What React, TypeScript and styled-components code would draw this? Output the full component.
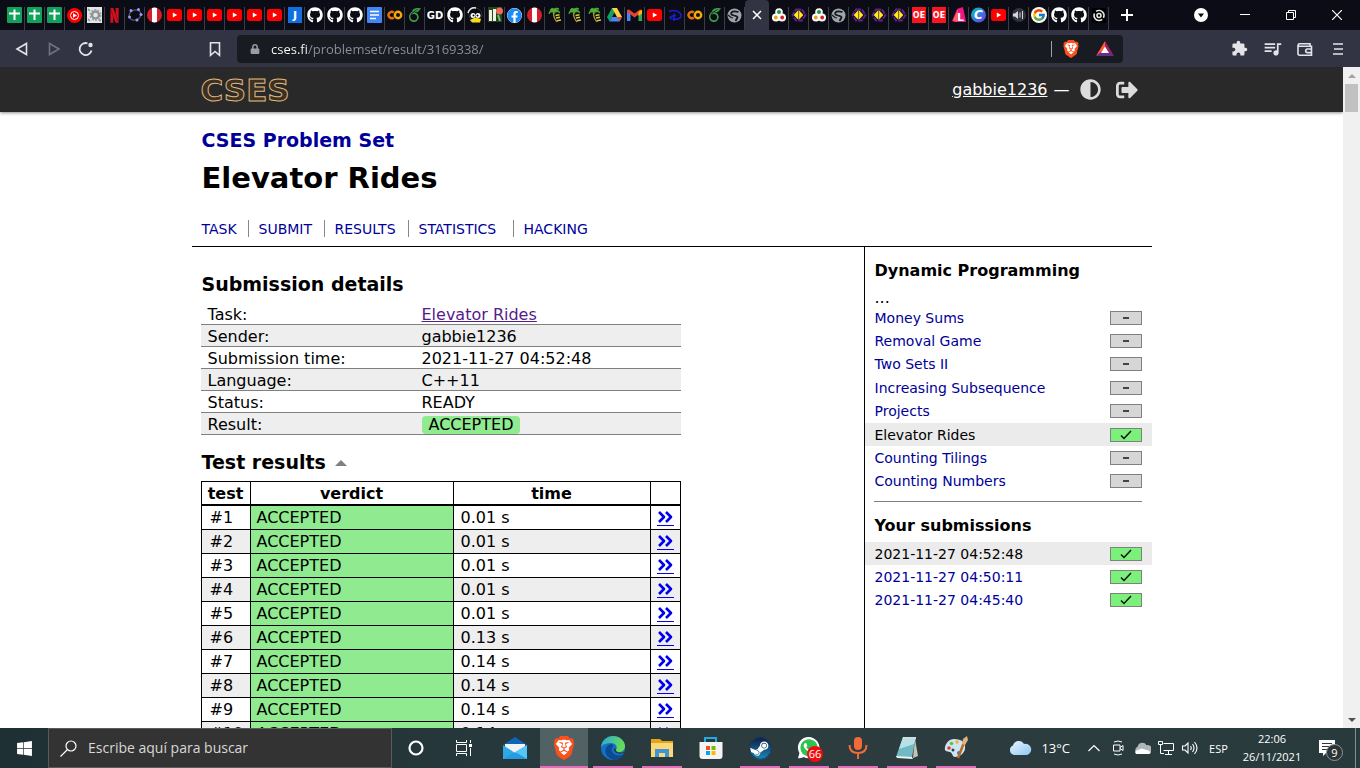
import React from "react";
import styled, { createGlobalStyle, css } from "styled-components";
import {
  FaGithub, FaFacebook, FaAdjust, FaSignOutAlt,
  FaWhatsapp, FaSteam, FaLock, FaWindows,
} from "react-icons/fa";
import { FcGoogle } from "react-icons/fc";
import { SiBrave, SiOverleaf, SiNetflix } from "react-icons/si";
import { MdQueueMusic, MdExtension } from "react-icons/md";

const pageFont = '"DejaVu Sans", Verdana, sans-serif';
const uiFont = '"Open Sans", "Segoe UI", sans-serif';

const GlobalStyle = createGlobalStyle`
  * { box-sizing: border-box; }
  body { margin: 0; background: #fff; }
  button { border: 0; padding: 0; background: none; color: inherit; font: inherit; }
  h1, h2, h3, ul { margin: 0; padding: 0; }
  svg { display: block; flex: none; }
`;

const Shell = styled.div`
  display: flex;
  flex-direction: column;
  height: 100vh;
  overflow: hidden;
  font-family: ${uiFont};
`;

/* ---------- browser chrome ---------- */

const TabStrip = styled.div`
  display: flex;
  height: 30px;
  flex: none;
  padding-left: 5px;
  background: #0b0c15;
  color: #fff;
`;

const Tab = styled.button`
  display: flex;
  align-items: center;
  justify-content: center;
  width: 20px;
  height: 23px;
  margin-top: 7px;
  padding-bottom: 7px;
  border-right: 1px solid #3c3d45;
`;

const ActiveTab = styled.button`
  display: flex;
  align-items: center;
  justify-content: center;
  width: 24px;
  height: 30px;
  border-radius: 4px 4px 0 0;
  background: #323443;
`;

const StripButton = styled.button<{ $width: number }>`
  display: flex;
  align-items: center;
  justify-content: center;
  width: ${(p) => p.$width}px;
  height: 30px;
`;

const StripSpace = styled.div`
  flex: 1;
`;

const Toolbar = styled.div`
  display: flex;
  align-items: center;
  flex: none;
  height: 37px;
  padding: 0 6px;
  background: #323443;
  color: #e4e4e8;
`;

const ToolButton = styled.button<{ $dim?: boolean }>`
  display: flex;
  align-items: center;
  justify-content: center;
  width: 32px;
  height: 30px;
  opacity: ${(p) => (p.$dim ? 0.35 : 1)};
`;

const NavGroup = styled.div`
  display: flex;
  flex: 1;
  justify-content: space-between;
  max-width: 225px;
  margin-right: 6px;
`;

const ToolGroup = styled.div`
  display: flex;
  margin-left: auto;
  gap: 1px;
`;

const AddressBar = styled.div`
  display: flex;
  align-items: center;
  flex: 1;
  max-width: 886px;
  height: 28px;
  padding: 0 2px 0 13px;
  border-radius: 4px;
  background: #191b23;
  color: #9a9ca6;
`;

const AddressInput = styled.input`
  flex: 1;
  min-width: 0;
  height: 24px;
  margin-left: 11px;
  padding: 0;
  border: 0;
  outline: 0;
  font: 13px/24px ${uiFont};
  color: #8f9199;
  background: linear-gradient(90deg, #fff 37px, #8f9199 37px);
  background-clip: text;
  -webkit-text-fill-color: transparent;
`;

const AddressDivider = styled.span`
  width: 1px;
  height: 16px;
  margin-right: 3px;
  background: #a0a1a8;
`;

const Shields = styled(ToolButton)`
  margin-right: 2px;
`;

/* ---------- web page ---------- */

const Viewport = styled.div`
  display: flex;
  flex: 1;
  min-height: 0;
`;

const Page = styled.div`
  flex: 1;
  overflow-y: auto;
  scrollbar-width: none;
  background: #fff;
  color: #000;
  font: 16px/20px ${pageFont};
`;

const Scrollbar = styled.div`
  display: flex;
  flex-direction: column;
  align-items: center;
  width: 17px;
  background: #f0f0f0;
`;

const ScrollArrow = styled.span<{ $down?: boolean }>`
  display: flex;
  align-items: center;
  justify-content: center;
  height: 17px;
  color: ${(p) => (p.$down ? "#505050" : "#a3a3a3")};
  margin-top: ${(p) => (p.$down ? "auto" : "0")};
`;

const ScrollThumb = styled.span`
  width: 13px;
  height: 28px;
  background: #c1c1c1;
`;

const SiteHeader = styled.header`
  background: #292929;
  box-shadow: 0 1px 3px rgba(0, 0, 0, 0.45);
`;

const Container = styled.div`
  max-width: 960px;
  margin: 0 auto;
`;

const HeaderRow = styled(Container)`
  display: flex;
  align-items: center;
  justify-content: space-between;
  height: 45px;
  padding: 0 14px 0 9px;
  color: #fff;
`;

const Logo = styled.a`
  font: bold 31px/46px ${pageFont};
  color: #3d3023;
  -webkit-text-stroke: 1px #dcb87c;
  text-decoration: none;
`;

const Controls = styled.div`
  display: flex;
  align-items: center;
  color: #dcdcdc;
`;

const UserLink = styled.a`
  color: #fff;
`;

const Dash = styled.span`
  margin: 0 10px 0 6px;
  color: #fff;
`;

const ControlLink = styled.a`
  margin-right: 15px;
  color: #dcdcdc;
  &:last-child { margin-right: 0; }
`;

const TitleBlock = styled.div`
  padding: 16px 10px 9px;
  border-bottom: 1px solid #000;
`;

const Category = styled.h3`
  font-size: 19px;
  line-height: 24px;
  a { color: #009; text-decoration: none; }
`;

const Title = styled.h1`
  margin-top: 8px;
  font-size: 29px;
  line-height: 36px;
`;

const NavList = styled.ul`
  display: grid;
  grid-template-columns: 57px 76px 84px 105px auto;
  margin-top: 24px;
  list-style: none;
`;

const NavItem = styled.li`
  margin-right: 10px;
  padding-top: 2px;
  border-right: 1px solid #888;
  font-size: 14px;
  line-height: 15px;
  &:last-child { border: 0; }
  a { color: #009; text-decoration: none; }
`;

const Columns = styled.div`
  display: flex;
`;

const Content = styled.main`
  flex: 1;
  padding: 25px 9px 0;
`;

const SectionTitle = styled.h2`
  display: flex;
  align-items: center;
  gap: 9px;
  margin-bottom: 7px;
  padding-left: 1px;
  font-size: 19px;
  line-height: 24px;
`;

const Summary = styled.table`
  width: 480px;
  max-width: 100%;
  margin-bottom: 15px;
  border-spacing: 0;
  table-layout: fixed;
  tr:nth-child(even) { background: #eee; }
  th, td {
    height: 22px;
    padding: 2px 0 0 7px;
    border-bottom: 1px solid #808080;
    font-weight: normal;
    line-height: 19px;
    text-align: left;
  }
  th { width: 214px; }
`;

const VisitedLink = styled.a`
  color: #551a8b;
`;

const Verdict = styled.span`
  display: block;
  width: max-content;
  padding: 0 7px;
  border-radius: 4px;
  background: #90ea90;
  line-height: 18px;
`;

const Results = styled.table`
  width: 480px;
  max-width: 100%;
  border-collapse: collapse;
  table-layout: fixed;
  th, td {
    height: 24px;
    padding: 2px 6px 0;
    border: 1px solid #000;
    line-height: 20px;
  }
  th { height: 23px; border-bottom-width: 2px; }
  tbody tr:nth-child(even) { background: #eee; }
  td:nth-child(1) { padding-left: 8px; }
  td:nth-child(3) { padding-left: 7px; }
`;

const Col = styled.col<{ $width: number }>`
  width: ${(p) => p.$width}px;
`;

const VerdictCell = styled.td`
  background: #90ea90;
`;

const DetailLink = styled.a`
  display: block;
  width: 17px;
  padding-bottom: 1px;
  border-bottom: 1px solid #00f;
  color: #00e;
`;

const Sidebar = styled.aside`
  flex: 0 0 30%;
  padding-top: 14px;
  border-left: 1px solid #000;
`;

const SideTitle = styled.h3`
  padding-left: 10px;
  margin-bottom: 6px;
  font-size: 16px;
  line-height: 20px;
`;

const More = styled.div`
  padding: 2px 0 0 10px;
  line-height: 17px;
`;

const SideList = styled.ul<{ $height: number }>`
  display: grid;
  grid-auto-rows: 1fr;
  height: ${(p) => p.$height}px;
  list-style: none;
`;

const SideRow = styled.li<{ $current?: boolean }>`
  display: flex;
  align-items: center;
  justify-content: space-between;
  padding: 0 10px;
  font-size: 14px;
  background: ${(p) => (p.$current ? "#ebebeb" : "transparent")};
  a { color: ${(p) => (p.$current ? "#000" : "#009")}; text-decoration: none; }
`;

const Rule = styled.hr`
  height: 1px;
  margin: 8px 10px 14px 9px;
  border: 0;
  background: #808080;
`;

const Score = styled.span<{ $done: boolean }>`
  display: flex;
  align-items: center;
  justify-content: center;
  width: 32px;
  height: 14px;
  border: 1px solid #808080;
  background: ${(p) => (p.$done ? "#7bf07b" : "#d6d6d6")};
`;

/* ---------- taskbar ---------- */

const Taskbar = styled.div`
  display: flex;
  flex: none;
  height: 40px;
  background: linear-gradient(90deg, #1e3033, #27383c 36%, #2c3c3f 60%, #293a3d);
  color: #fff;
`;

const TaskCell = styled.button<{ $open?: boolean; $active?: boolean }>`
  position: relative;
  display: flex;
  align-items: center;
  justify-content: center;
  width: 48px;
  height: 40px;
  background: ${(p) => (p.$active ? "#526164" : "transparent")};
  ${(p) =>
    p.$open &&
    css`
      &::after {
        content: "";
        position: absolute;
        left: ${p.$active ? 0 : 4}px;
        right: ${p.$active ? 0 : 4}px;
        bottom: 0;
        height: 2px;
        background: #e66cb9;
      }
    `}
`;

const SearchBox = styled.label`
  display: flex;
  align-items: center;
  flex: 0 1 344px;
  height: 40px;
  padding-left: 11px;
  border: 1px solid #5a5a5a;
  background: #333;
  input {
    flex: 1;
    min-width: 0;
    margin-left: 11px;
    padding: 0;
    border: 0;
    outline: 0;
    background: none;
    color: #fff;
    font: 14px/20px ${uiFont};
  }
  input::placeholder { color: #d8d8d8; opacity: 1; }
`;

const Apps = styled.div`
  display: flex;
  gap: 1px;
  margin-left: 3px;
`;

const Badge = styled.span`
  position: absolute;
  right: 10px;
  bottom: 6px;
  width: 16px;
  height: 16px;
  border-radius: 50%;
  background: #f00c0c;
  font: 11px/16px ${uiFont};
  text-align: center;
`;

const Tray = styled.div`
  display: flex;
  align-items: center;
  margin-left: auto;
`;

const Weather = styled.button`
  display: flex;
  align-items: center;
  gap: 9px;
  margin-right: 12px;
  font-size: 13px;
`;

const TrayButton = styled.button`
  display: flex;
  align-items: center;
  justify-content: center;
  width: 24px;
  height: 40px;
`;

const Language = styled.button`
  width: 33px;
  font-size: 11px;
  text-align: center;
`;

const Clock = styled.button`
  width: 74px;
  font-size: 11px;
  line-height: 18px;
  text-align: center;
`;

const Notices = styled.button`
  position: relative;
  width: 24px;
  height: 26px;
  margin: 0 12px 0 10px;
`;

const NoticeCount = styled.span`
  position: absolute;
  right: 0;
  bottom: 0;
  width: 17px;
  height: 17px;
  border: 1px solid #8b9698;
  border-radius: 50%;
  background: #2d3436;
  font: 11px/15px ${uiFont};
  text-align: center;
`;

const DesktopEdge = styled.button`
  width: 5px;
  height: 40px;
  border-left: 1px solid #829093;
`;

/* ---------- favicons ---------- */

const Lettered = ({ t, bg = "none", fg = "#fff", size = 9 }: { t: string; bg?: string; fg?: string; size?: number }) => (
  <svg width="16" height="16" viewBox="0 0 16 16">
    <rect x="1" width="14" height="16" fill={bg} />
    <text x="8" y={8 + size * 0.36} textAnchor="middle" fontSize={size} fontWeight="bold" fontFamily={pageFont} fill={fg}>{t}</text>
  </svg>
);

const Globe = () => (
  <svg width="15" height="15" viewBox="0 0 15 15">
    <circle cx="7.5" cy="7.5" r="7" fill="#a0a5ac" />
    <path d="M11.500 4Q6 2.500 4.500 4.500t2.500 3 3.500 2-2 3.500" fill="none" stroke="#15161f" strokeWidth="1.800" />
    <path d="M1 7l3 2.500 2 .5" fill="none" stroke="#15161f" strokeWidth="1.200" />
  </svg>
);

const favicons: Record<string, React.ReactNode> = {
  sheets: (
    <svg width="15" height="16" viewBox="0 0 15 16">
      <rect width="15" height="16" rx="1" fill="#12a05d" />
      <path d="M2 6.500h11M7.500 2.500v10.500" stroke="#fff" strokeWidth="2" />
    </svg>
  ),
  music: (
    <svg width="15" height="15" viewBox="0 0 15 15">
      <circle cx="7.500" cy="7.500" r="7.500" fill="#f00" />
      <circle cx="7.500" cy="7.500" r="4" fill="none" stroke="#fff" />
      <path d="M6 5.300l4 2.200-4 2.200z" fill="#fff" />
    </svg>
  ),
  gear: (
    <svg width="15" height="16" viewBox="0 0 15 16">
      <rect width="15" height="16" fill="#e4e6e7" />
      <circle cx="8.500" cy="8" r="3.500" fill="none" stroke="#8d9598" strokeWidth="2.500" />
      <circle cx="8.500" cy="8" r="5.300" fill="none" stroke="#9aa2a5" strokeWidth="1.500" strokeDasharray="2 1.300" />
      <path d="M1 2l2 2M1 12l2 2M12 14l2-1" stroke="#889094" strokeWidth="1.500" />
    </svg>
  ),
  netflix: <SiNetflix size={15} color="#d0101b" />,
  geogebra: (
    <svg width="16" height="16" viewBox="0 0 16 16">
      <ellipse cx="8" cy="8" rx="6" ry="5" fill="none" stroke="#555566" strokeWidth="1.300" transform="rotate(-20 8 8)" />
      <g fill="#9a9aff"><circle cx="4" cy="3.500" r="1.500" /><circle cx="11.500" cy="2.500" r="1.500" /><circle cx="14" cy="7.500" r="1.500" /><circle cx="10" cy="13" r="1.500" /><circle cx="2.500" cy="10" r="1.500" /></g>
    </svg>
  ),
  peru: (
    <svg width="15" height="16" viewBox="0 0 15 16">
      <circle cx="7.500" cy="8" r="7.500" fill="#d5202c" />
      <path d="M5 .9Q7.500 .2 10 .9V15.100Q7.500 15.800 5 15.100z" fill="#fff" />
    </svg>
  ),
  youtube: (
    <svg width="15" height="12" viewBox="0 0 15 12">
      <rect width="15" height="12" rx="2.500" fill="#f00" />
      <path d="M5.800 3.500l4.400 2.500-4.400 2.500z" fill="#fff" />
    </svg>
  ),
  j: <Lettered t="J" bg="#1070e0" size={11} />,
  github: <FaGithub size={16} color="#fff" />,
  docs: (
    <svg width="15" height="16" viewBox="0 0 15 16">
      <rect width="15" height="16" rx="1" fill="#4285f4" />
      <path d="M3 4.500h9M3 8h9M3 11.500h6" stroke="#fff" strokeWidth="1.600" />
    </svg>
  ),
  colab: (
    <svg width="16" height="16" viewBox="0 0 16 16">
      <g fill="none" strokeWidth="2.400"><path d="M6.800 5.500a3.200 3.200 0 1 0 0 5" stroke="#e8710a" /><circle cx="11" cy="8" r="3.200" stroke="#f9ab00" /></g>
    </svg>
  ),
  overleaf: <SiOverleaf size={14} color="#3f9d48" />,
  gd: <Lettered t="GD" size={10} />,
  bird: (
    <svg width="16" height="16" viewBox="0 0 16 16">
      <path d="M1 5Q4 0 9 1q6 1 6 8l-3 5H4z" fill="#08090c" stroke="#555" strokeWidth=".5" />
      <path d="M1 6Q3 0 9 1" stroke="#e8e8e8" strokeWidth="1.500" fill="none" />
      <circle cx="6" cy="8.500" r="2.500" fill="#fff" /><circle cx="11" cy="8.500" r="2.500" fill="#fff" />
      <circle cx="6.500" cy="8.500" r="1" /><circle cx="10.500" cy="8.500" r="1" />
      <path d="M3 13l5-2.500 6 1.500-1 3.500H5z" fill="#f5dc18" />
    </svg>
  ),
  plant: (
    <svg width="16" height="16" viewBox="0 0 16 16">
      <path d="M1 0h14v15H1z" fill="#1d4a1c" /><path d="M2 3h3v11H2zM6 2h3v12H6z" fill="#f3efe4" />
      <circle cx="12.500" cy="4" r="3.500" fill="#f06a5a" /><path d="M11 8l2 6" stroke="#86b965" strokeWidth="2" />
    </svg>
  ),
  facebook: <FaFacebook size={15} color="#1b8cf5" style={{ background: "#fff", borderRadius: "50%" }} />,
  palm: (
    <svg width="16" height="16" viewBox="0 0 16 16">
      <path d="M3 3q2-3 4-1 3-2 5 0-2 0-3 1 3 0 4 3-2-2-5-1L7 7 6 5Q3 4 2 7q0-3 2-4z" fill="#4fae35" stroke="#4fae35" strokeWidth=".8" />
      <path d="M6.500 6q0 5 3.500 9" stroke="#a8962c" strokeWidth="1.300" fill="none" />
      <path d="M8.500 8.500l4-.8M9 11l4-.8M10 13.800l4-.8" stroke="#d8c838" strokeWidth="1.500" fill="none" />
    </svg>
  ),
  drive: (
    <svg width="15" height="14" viewBox="0 0 15 14">
      <path d="M5 0h5L5 9 2.500 13.500 0 9z" fill="#12a15f" /><path d="M5 0h5l5 9h-5z" fill="#ffcf44" /><path d="M5 9h10l-2.500 4.500h-10z" fill="#4688f4" /><path d="M10 9h5l-2.500 4.500z" fill="#e94435" />
    </svg>
  ),
  gmail: (
    <svg width="15" height="12" viewBox="0 0 15 12">
      <path d="M0 1.500v10.500h3.500V4z" fill="#4285f4" /><path d="M15 1.500v10.500h-3.500V4z" fill="#34a853" />
      <path d="M1.500 2l6 4.500 6-4.500" stroke="#ea4335" strokeWidth="3" fill="none" strokeLinecap="round" />
      <path d="M11.500 3L15 .8V4.500L11.500 7z" fill="#fbbc04" />
    </svg>
  ),
  disney: (
    <svg width="16" height="16" viewBox="0 0 16 16">
      <path d="M2 4.500Q9 2 13 6q3 4-2 6-5 1-8-1 0-2 6-2.500M7 6.500v7.500" fill="none" stroke="#1a20d8" strokeWidth="1.500" />
    </svg>
  ),
  globe: <Globe />,
  dots: (
    <svg width="14" height="14" viewBox="0 0 14 14">
      <g fill="#fff"><circle cx="7" cy="4" r="3.800" /><circle cx="4" cy="9.500" r="4" /><circle cx="10" cy="9.500" r="4" /></g>
      <circle cx="7" cy="4" r="2.100" fill="#259a3d" /><circle cx="3.800" cy="9.500" r="1.900" fill="#eda024" /><circle cx="10.200" cy="9.500" r="1.900" fill="#d92425" />
    </svg>
  ),
  purple: (
    <svg width="16" height="16" viewBox="0 0 16 16">
      <path d="M5 2.500h6l3.500 5.500-3.500 5.500H5L1.500 8z" fill="#1c0b2c" stroke="#5b2388" strokeWidth="1.800" strokeDasharray="5 1" />
      <path d="M7 3.800v8.400L3 8zM8.200 3.800l3.800 4.200-3.800 4.200z" fill="#ffed13" stroke="#ffed13" strokeWidth=".6" />
    </svg>
  ),
  oe: <Lettered t="OE" bg="#fa1420" size={8} />,
  l: (
    <svg width="16" height="16" viewBox="0 0 16 16">
      <path d="M1 14L6 2l6-2 3 15H3z" fill="#ee1782" /><path d="M2 13L7 3l-1 12z" fill="#f76a4f" />
      <text x="6" y="14" fontSize="11" fontWeight="bold" fontFamily={pageFont} fill="#fff">L</text>
    </svg>
  ),
  canva: (
    <svg width="15" height="16" viewBox="0 0 15 16">
      <defs><linearGradient id="cv" x2="1" y2="1"><stop stopColor="#00c4cc" /><stop offset="1" stopColor="#6c35e8" /></linearGradient></defs>
      <circle cx="7.500" cy="8" r="7.500" fill="url(#cv)" />
      <text x="7.500" y="12" textAnchor="middle" fontSize="12" fontWeight="bold" fontStyle="italic" fontFamily={pageFont} fill="#fff">C</text>
    </svg>
  ),
  audio: (
    <svg width="14" height="16" viewBox="0 0 14 16">
      <circle cx="7" cy="8" r="7" fill="#30323f" />
      <path d="M1 6.500h2L6 4v8L3 9.500H1z" fill="#d5d6da" /><path d="M8 5.500v5M10.500 4v8" stroke="#d5d6da" />
    </svg>
  ),
  google: <svg width="16" height="16" viewBox="0 0 16 16"><circle cx="8" cy="8" r="8" fill="#fff" /><FcGoogle x={1} y={1} size={14} /></svg>,
  spiral: (
    <svg width="14" height="15" viewBox="0 0 14 15">
      <rect width="14" height="15" fill="#000" />
      <g fill="none" stroke="#e8e8e8"><circle cx="7" cy="7.500" r="2" strokeWidth="1.600" /><circle cx="7" cy="7.500" r="5" strokeWidth="1.500" strokeDasharray="13 2.700" transform="rotate(50 7 7.500)" /></g>
    </svg>
  ),
};

const leftTabs = (
  "sheets sheets sheets music gear netflix geogebra peru youtube youtube youtube youtube youtube youtube j github github github docs colab overleaf gd github bird plant facebook peru palm palm palm drive gmail youtube disney colab overleaf globe"
).split(" ");
const rightTabs = "dots purple dots globe purple purple purple oe oe l canva youtube audio google github github spiral".split(" ");

const Line = ({ d, size = 16, w = 1, box = 16 }: { d: string; size?: number; w?: number; box?: number }) => (
  <svg width={size} height={size} viewBox={`0 0 ${box} ${box}`} fill="none" stroke="currentColor" strokeWidth={w}>
    <path d={d} />
  </svg>
);

const Lion = ({ size }: { size: number }) => (
  <svg width={size} height={size} viewBox="0 0 24 24">
    <path d="M5 3h14l2 5-2 10-7 5-7-5L3 8z" fill="#fff" />
    <SiBrave size={24} color="#fb4f1c" />
  </svg>
);

const Chrome = () => (
  <>
    <TabStrip>
      {leftTabs.map((n, i) => <Tab key={i} aria-label={n}>{favicons[n]}</Tab>)}
      <ActiveTab aria-label="Close tab"><Line size={10} box={10} w={1.500} d="M1 1l8 8M9 1L1 9" /></ActiveTab>
      {rightTabs.map((n, i) => <Tab key={i} aria-label={n}>{favicons[n]}</Tab>)}
      <StripButton $width={36} aria-label="New tab"><Line size={12} box={12} w={2} d="M6 0v12M0 6h12" /></StripButton>
      <StripSpace />
      <StripButton $width={42} aria-label="Search tabs">
        <svg width="14" height="14" viewBox="0 0 14 14"><circle cx="7" cy="7" r="7" fill="#fff" /><path d="M4 5.500h6L7 9.500z" fill="#0b0c15" /></svg>
      </StripButton>
      <StripButton $width={46} aria-label="Minimize"><Line size={10} box={10} d="M0 4.500h10" /></StripButton>
      <StripButton $width={46} aria-label="Restore"><Line size={10} box={10} d="M.5 2.500h7v7h-7zM2.500 2.500v-2h7v7h-2" /></StripButton>
      <StripButton $width={46} aria-label="Close"><Line size={10} box={10} w={1.200} d="M0 0l10 10M10 0L0 10" /></StripButton>
    </TabStrip>
    <Toolbar>
      <NavGroup>
        <ToolButton aria-label="Back"><Line w={1.600} d="M12.500 2.500v11L3 8z" /></ToolButton>
        <ToolButton $dim aria-label="Forward"><Line w={1.600} d="M3.500 2.500v11L13 8z" /></ToolButton>
        <ToolButton aria-label="Reload">
          <svg width="16" height="16" viewBox="0 0 16 16"><path d="M13.500 9.500A6 6 0 1 1 9.500 2.300" fill="none" stroke="currentColor" strokeWidth="1.800" /><circle cx="12.500" cy="4" r="2.200" fill="currentColor" /></svg>
        </ToolButton>
        <StripSpace />
        <ToolButton aria-label="Bookmark"><Line w={1.600} d="M3.500 1.700h9v12.600L8 10.500l-4.500 3.800z" /></ToolButton>
      </NavGroup>
      <AddressBar>
        <FaLock size={10} />
        <AddressInput aria-label="Address" defaultValue="cses.fi/problemset/result/3169338/" />
        <AddressDivider />
        <Shields aria-label="Brave Shields"><Lion size={18} /></Shields>
        <ToolButton aria-label="Brave Rewards">
          <svg width="18" height="16" viewBox="0 0 18 16">
            <path d="M9 0L0 15l9-5z" fill="#ff5b32" /><path d="M9 0l9 15-9-6z" fill="#9e1f63" /><path d="M0 15h18l-5-4H5z" fill="#662d91" /><path d="M9 5.500l4 6.500H5z" fill="#fff" />
          </svg>
        </ToolButton>
      </AddressBar>
      <ToolGroup>
        <ToolButton aria-label="Extensions"><MdExtension size={17} /></ToolButton>
        <ToolButton aria-label="Playlist"><MdQueueMusic size={21} /></ToolButton>
        <ToolButton aria-label="Wallet">
          <Line w={1.600} d="M13 5.500V2.700H2.500a1.300 1.300 0 0 0 0 2.600H14.500v8.900H2.500a1.500 1.500 0 0 1-1.500-1.500V4M15 8h-4.500a1.800 1.800 0 0 0 0 3.600H15" />
        </ToolButton>
        <ToolButton aria-label="Menu"><Line w={1.500} d="M3 3h10M4 8h9M3 13h10" /></ToolButton>
      </ToolGroup>
    </Toolbar>
  </>
);

/* ---------- page data ---------- */

const navLinks = ["TASK", "SUBMIT", "RESULTS", "STATISTICS", "HACKING"];
const times = ["0.01", "0.01", "0.01", "0.01", "0.01", "0.13", "0.14", "0.14", "0.14", "0.14"];
const tasks = ["Money Sums", "Removal Game", "Two Sets II", "Increasing Subsequence", "Projects", "Elevator Rides", "Counting Tilings", "Counting Numbers"];
const submissions = ["2021-11-27 04:52:48", "2021-11-27 04:50:11", "2021-11-27 04:45:40"];
const details: [string, React.ReactNode][] = [
  ["Task:", <VisitedLink href="#task">Elevator Rides</VisitedLink>],
  ["Sender:", "gabbie1236"],
  ["Submission time:", "2021-11-27 04:52:48"],
  ["Language:", "C++11"],
  ["Status:", "READY"],
  ["Result:", <Verdict>ACCEPTED</Verdict>],
];

const ScoreBox = ({ done }: { done: boolean }) => (
  <Score $done={done}>
    {done ? (
      <svg width="12" height="10" viewBox="0 0 12 10"><path d="M1 5.500L4 8.500 11 1" fill="none" stroke="#111" strokeWidth="1.500" /></svg>
    ) : (
      <svg width="8" height="4" viewBox="0 0 8 4"><path d="M1 2h6" stroke="#444" strokeWidth="2" /></svg>
    )}
  </Score>
);

const Cses = () => (
  <Page>
    <SiteHeader>
      <HeaderRow>
        <Logo href="#home">CSES</Logo>
        <Controls>
          <UserLink href="#user">gabbie1236</UserLink>
          <Dash>—</Dash>
          <ControlLink href="#theme" aria-label="Dark mode"><FaAdjust size={21} /></ControlLink>
          <ControlLink href="#logout" aria-label="Log out"><FaSignOutAlt size={22} /></ControlLink>
        </Controls>
      </HeaderRow>
    </SiteHeader>
    <Container>
      <TitleBlock>
        <Category><a href="#problemset">CSES Problem Set</a></Category>
        <Title>Elevator Rides</Title>
        <NavList>
          {navLinks.map((n) => <NavItem key={n}><a href={`#${n.toLowerCase()}`}>{n}</a></NavItem>)}
        </NavList>
      </TitleBlock>
      <Columns>
        <Content>
          <SectionTitle>Submission details</SectionTitle>
          <Summary>
            <tbody>
              {details.map(([k, v]) => (
                <tr key={k}><th scope="row">{k}</th><td>{v}</td></tr>
              ))}
            </tbody>
          </Summary>
          <SectionTitle>
            Test results
            <svg width="12" height="7" viewBox="0 0 12 7"><path d="M0 7l6-6 6 6z" fill="#808080" /></svg>
          </SectionTitle>
          <Results>
            <colgroup><Col $width={49} /><Col $width={203} /><Col $width={197} /><Col $width={30} /></colgroup>
            <thead><tr><th>test</th><th>verdict</th><th>time</th><th /></tr></thead>
            <tbody>
              {times.map((t, i) => (
                <tr key={i}>
                  <td>#{i + 1}</td>
                  <VerdictCell>ACCEPTED</VerdictCell>
                  <td>{t} s</td>
                  <td>
                    <DetailLink href={`#test${i + 1}`} aria-label={`Test ${i + 1} details`}>
                      <svg width="17" height="14" viewBox="0 0 17 14" fill="none" stroke="currentColor" strokeWidth="2.600" strokeLinejoin="round">
                        <path d="M2 2l5 5-5 5M9 2l5 5-5 5" />
                      </svg>
                    </DetailLink>
                  </td>
                </tr>
              ))}
            </tbody>
          </Results>
        </Content>
        <Sidebar>
          <SideTitle>Dynamic Programming</SideTitle>
          <More>...</More>
          <SideList $height={187}>
            {tasks.map((t) => (
              <SideRow key={t} $current={t === "Elevator Rides"}><a href="#task">{t}</a><ScoreBox done={t === "Elevator Rides"} /></SideRow>
            ))}
          </SideList>
          <Rule />
          <SideTitle>Your submissions</SideTitle>
          <SideList $height={70}>
            {submissions.map((s, i) => (
              <SideRow key={s} $current={i === 0}><a href="#result">{s}</a><ScoreBox done /></SideRow>
            ))}
          </SideList>
        </Sidebar>
      </Columns>
    </Container>
  </Page>
);

/* ---------- taskbar icons ---------- */

const Mail = () => (
  <svg width="24" height="22" viewBox="0 0 24 22">
    <path d="M0 8l12-8 12 8z" fill="#0f66b8" /><path d="M2 7h20v9H2z" fill="#f1f3f5" />
    <path d="M0 8l12 8 12-8v14H0z" fill="#2fa8e8" /><path d="M24 8v14L12 15z" fill="#53c8f6" /><path d="M0 22l12-7 12 7z" fill="#1f92dc" opacity=".6" />
  </svg>
);
const Edge = () => (
  <svg width="24" height="24" viewBox="0 0 24 24">
    <defs>
      <linearGradient id="eg" x2="1" y2=".3"><stop stopColor="#2aa5dd" /><stop offset="1" stopColor="#66dc56" /></linearGradient>
    </defs>
    <circle cx="12" cy="12" r="12" fill="#1272c5" />
    <path d="M0 11C1 4 6 0 12 0c7 0 12 5 12 10 0 4-3 6-6 6-2 0-4-1-3-2 2-3 0-7-5-7-4 0-8 1-10 4z" fill="url(#eg)" />
    <path d="M10 8c-4 1-7 5-5 10 1 3 4 5 8 6 5 0 8-3 10-6-5 3-11 1-12-3-1-2 0-3 1-4 1-1 0-3-2-3z" fill="#0c4a93" />
    <path d="M13 12c-1 4 3 7 10 5 1-2-1 0-4-.5-3 0-5-2-4-3.500z" fill="#2a3b3e" />
  </svg>
);
const Folder = () => (
  <svg width="22" height="18" viewBox="0 0 22 18">
    <path d="M0 0h9l2 2h11v16H0z" fill="#e2a61a" /><path d="M0 4h22v14H0z" fill="#fbd873" />
    <path d="M4 18v-8h14v8h-4v-4H8v4z" fill="#3d93dd" />
  </svg>
);
const Store = () => (
  <svg width="24" height="24" viewBox="0 0 24 24">
    <path d="M6 7V2h11v5" fill="none" stroke="#25a9e0" strokeWidth="2" /><path d="M.5 6h23v14q0 3-3 3h-17q-3 0-3-3z" fill="#f4f4f4" />
    <path d="M7 10h4v4H7z" fill="#f25022" /><path d="M12.500 10h4v4h-4z" fill="#7fba00" /><path d="M7 15h4v4H7z" fill="#00a4ef" /><path d="M12.500 15h4v4h-4z" fill="#ffb900" />
  </svg>
);
const Whats = () => (
  <svg width="24" height="24" viewBox="0 0 24 24">
    <path d="M1 22l1.500-5A10.500 10.500 0 1 1 7 21z" fill="#fff" /><circle cx="12" cy="11.500" r="9" fill="#2dc351" />
    <FaWhatsapp size={24} color="#fff" />
  </svg>
);
const Steam = () => (
  <svg width="23" height="23" viewBox="0 0 23 23">
    <defs><linearGradient id="st" x2="0" y2="1"><stop stopColor="#101b45" /><stop offset="1" stopColor="#1b8ab8" /></linearGradient></defs>
    <circle cx="11.500" cy="11.500" r="10.500" fill="#fff" /><FaSteam size={23} fill="url(#st)" />
    <circle cx="11.500" cy="11.500" r="10.800" fill="none" stroke="#14365f" />
  </svg>
);
const Mic = () => (
  <svg width="20" height="22" viewBox="0 0 20 22">
    <rect x="6" width="8" height="13" rx="4" fill="#f26a38" /><path d="M1.500 8q0 8 8.500 8t8.500-8M10 16v6" fill="none" stroke="#f26a38" strokeWidth="2" />
  </svg>
);
const Notepad = () => (
  <svg width="24" height="24" viewBox="0 0 24 24">
    <path d="M20 3l3 17-5 2z" fill="#c9c1b2" /><path d="M8 1h13l-4 20H1z" fill="#70b9c5" /><path d="M8 1h13l-2 7L4 13z" fill="#b8e1e7" /><path d="M1 20l16 1 1 2-16-1z" fill="#ecf4f4" /><path d="M8 2h13" stroke="#dedede" strokeWidth="2" strokeDasharray="1 1" />
  </svg>
);
const Paint = () => (
  <svg width="24" height="24" viewBox="0 0 24 24">
    <path d="M10 3c8 0 12 4 11 10-1 5-6 8-10 8-3 0-2-4-5-5s-6 0-5-5c1-4 4-8 9-8z" fill="#cfe5f4" />
    <circle cx="5" cy="12" r="1.800" fill="#df3b36" /><circle cx="7.500" cy="7.500" r="1.800" fill="#5fc14c" /><circle cx="13" cy="6" r="1.800" fill="#f2b42b" /><circle cx="9" cy="14" r="1.500" fill="#263f4a" /><circle cx="15" cy="17" r="2" fill="#2c78d2" />
    <path d="M21 4l-7 18" stroke="#bb6a20" strokeWidth="2.500" /><path d="M23 0l-4 3-1 5 3 1 3-5z" fill="#e0b57a" />
  </svg>
);

const apps: { name: string; icon: React.ReactNode; open?: boolean; active?: boolean; count?: string }[] = [
  { name: "Mail", icon: <Mail /> },
  { name: "Brave", icon: <Lion size={24} />, open: true, active: true },
  { name: "Edge", icon: <Edge />, open: true },
  { name: "Files", icon: <Folder />, open: true },
  { name: "Store", icon: <Store /> },
  { name: "Steam", icon: <Steam />, open: true },
  { name: "WhatsApp", icon: <Whats />, open: true, count: "66" },
  { name: "Recorder", icon: <Mic />, open: true },
  { name: "Notepad", icon: <Notepad />, open: true },
  { name: "Paint", icon: <Paint />, open: true },
];

const CloudShape = "M5 15a5 5 0 0 1-1-9.500A6 6 0 0 1 15 4a5.500 5.500 0 0 1 3 11z";

const Desktop = () => (
  <Taskbar>
    <TaskCell aria-label="Start"><FaWindows size={17} /></TaskCell>
    <SearchBox>
      <Line size={17} w={1.200} box={17} d="M16 6a5 5 0 1 1-10 0 5 5 0 0 1 10 0zM7.500 9.500L.5 16.500" />
      <input aria-label="Buscar" placeholder="Escribe aquí para buscar" />
    </SearchBox>
    <TaskCell aria-label="Cortana"><Line w={2.200} d="M14.500 8A6.500 6.500 0 1 1 1.500 8a6.500 6.500 0 0 1 13 0z" /></TaskCell>
    <TaskCell aria-label="Task view"><Line d="M.5 0v2.500h10V0M.5 4.500h10v7H.5zM.5 16v-2.500h10V16M14.500 0v3M14.500 8v8M13 5.500h3M13 4.500h3M13 6.500h3" /></TaskCell>
    <Apps>
      {apps.map((a) => (
        <TaskCell key={a.name} aria-label={a.name} $open={a.open} $active={a.active}>
          {a.icon}
          {a.count && <Badge>{a.count}</Badge>}
        </TaskCell>
      ))}
    </Apps>
    <Tray>
      <Weather>
        <svg width="23" height="16" viewBox="0 0 23 16"><defs><linearGradient id="cl" x2="1" y2="1"><stop stopColor="#eaf6ff" /><stop offset="1" stopColor="#8ec8f2" /></linearGradient></defs><path d={CloudShape} fill="url(#cl)" /></svg>
        13°C
      </Weather>
      <TrayButton aria-label="Hidden icons"><Line size={12} box={12} w={1.200} d="M.5 9L6 3.500 11.500 9" /></TrayButton>
      <TrayButton aria-label="Meet now"><Line d="M3.500 5h6.500v6H3.500zM10 7.500l3-2v5l-3-2M4 2q4-2 8 0M4 14q4 2 8 0" /></TrayButton>
      <TrayButton aria-label="OneDrive"><svg width="17" height="12" viewBox="0 0 20 15"><path d={CloudShape} fill="#aeb7b9" /><path d="M2 15q-3-4 2-5l5-2 6 2q5 0 4 5z" fill="#fff" /></svg></TrayButton>
      <TrayButton aria-label="Network"><Line d="M5.500 3.500h10v7h-10M10.500 11v3M7 14.500h7M.5 1.500h4v3h-4zM2.500 5v8.500H6" /></TrayButton>
      <TrayButton aria-label="Volume"><Line w={1.100} d="M.5 6h2.500l3-3v10l-3-3H.5zM8.500 6q1.500 2 0 4M10.500 4q3 4 0 8M12.500 2q5 6 0 12" /></TrayButton>
      <Language>ESP</Language>
      <Clock>22:06<br />26/11/2021</Clock>
      <Notices aria-label="Notifications">
        <svg width="16" height="16" viewBox="0 0 16 16"><path d="M0 0h16v13H7l-3 3v-3H0z" fill="#fff" /><path d="M3 3.500h10M3 6.500h10M3 9.500h6" stroke="#2a3a3d" /></svg>
        <NoticeCount>9</NoticeCount>
      </Notices>
      <DesktopEdge aria-label="Show desktop" />
    </Tray>
  </Taskbar>
);

export default function App() {
  return (
    <Shell>
      <GlobalStyle />
      <Chrome />
      <Viewport>
        <Cses />
        <Scrollbar>
          <ScrollArrow><svg width="8" height="4" viewBox="0 0 8 4"><path d="M0 4l4-4 4 4z" fill="currentColor" /></svg></ScrollArrow>
          <ScrollThumb />
          <ScrollArrow $down><svg width="8" height="4" viewBox="0 0 8 4"><path d="M0 0l4 4 4-4z" fill="currentColor" /></svg></ScrollArrow>
        </Scrollbar>
      </Viewport>
      <Desktop />
    </Shell>
  );
}
